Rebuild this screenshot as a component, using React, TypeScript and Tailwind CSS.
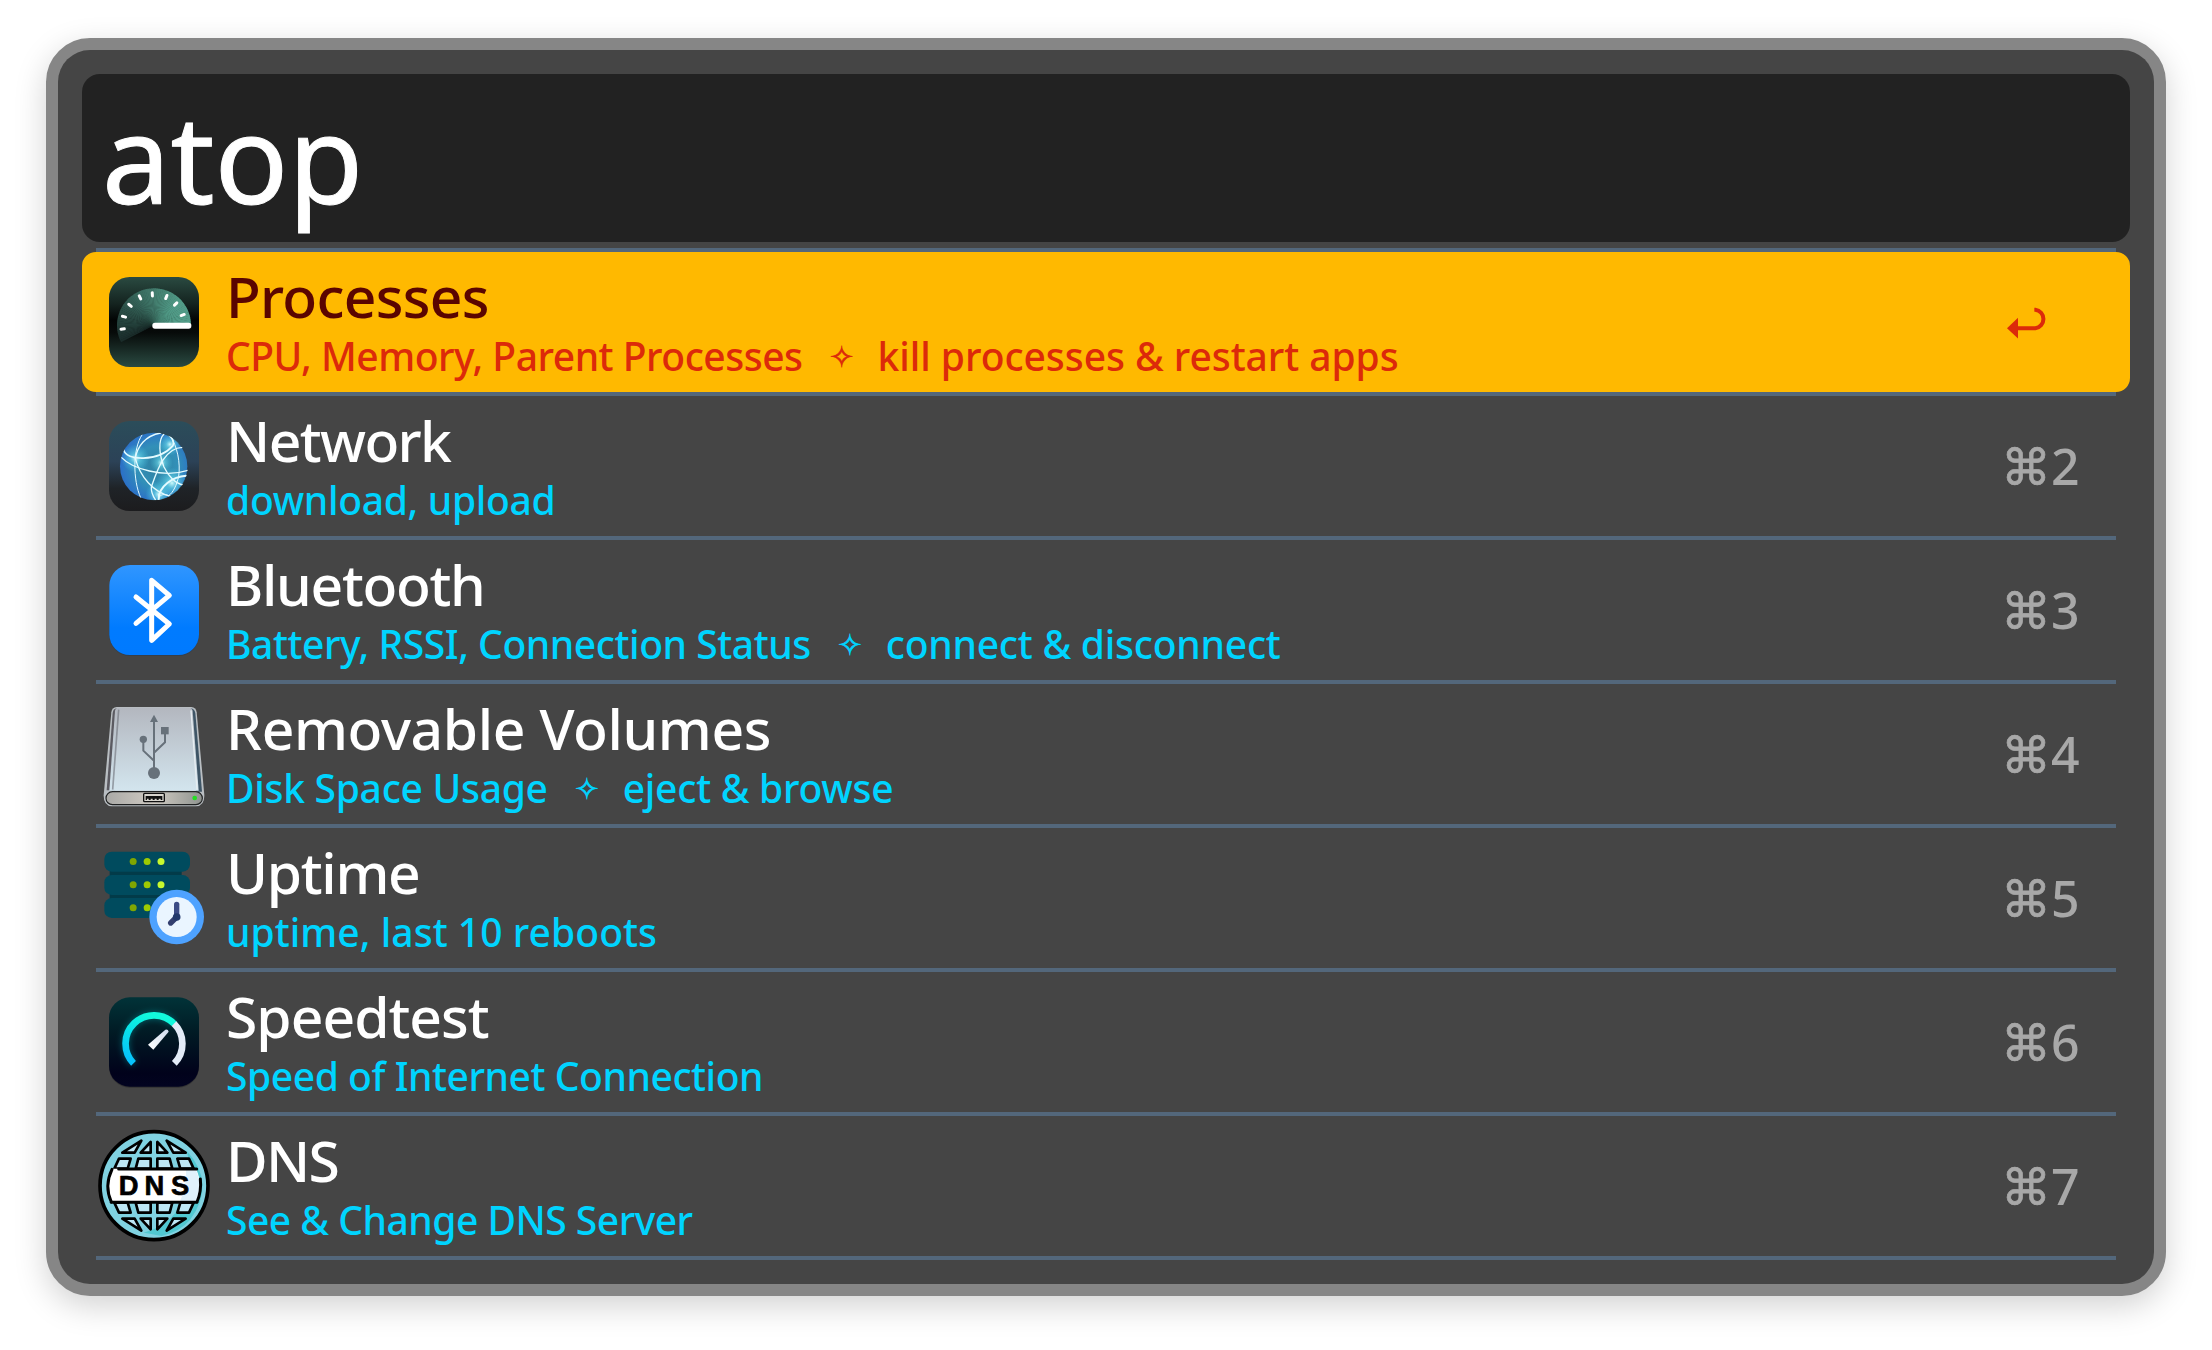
import type { ReactNode } from "react";

function ProcessesIcon() {
  const steps = 68;
  const start = 207;
  const slices = Array.from({ length: steps }, (_, i) => {
    const t = i / (steps - 1);
    const a0 = ((start - (i * start) / steps) * Math.PI) / 180;
    const a1 = ((start - ((i + 1.25) * start) / steps) * Math.PI) / 180;
    const end = i === steps - 1 ? 0 : a1;
    const k = Math.min(1, t * 1.25);
    const color = `rgb(${Math.round(26 + 56 * k)},${Math.round(44 + 112 * k)},${Math.round(42 + 94 * k)})`;
    const d = `M192 196L${192 + 111 * Math.cos(a0)} ${196 - 111 * Math.sin(a0)}A111 111 0 0 1 ${192 + 111 * Math.cos(end)} ${196 - 111 * Math.sin(end)}Z`;
    return { d, color };
  });
  const ticks = [[98, 207], [102, 170], [120, 136], [150, 112], [187, 103], [229, 111], [257, 132], [278, 165]];
  return (
    <svg viewBox="0 -6 384 384" className="size-32 shrink-0">
      <defs>
        <linearGradient id="procBg" x1="0" y1="0" x2="0" y2="1">
          <stop offset="0" stopColor="#2a4a41" />
          <stop offset="0.3" stopColor="#14231f" />
          <stop offset="0.48" stopColor="#020404" />
          <stop offset="0.62" stopColor="#070b0a" />
          <stop offset="1" stopColor="#2a4a41" />
        </linearGradient>
      </defs>
      <rect x="57" y="51" width="270" height="270" rx="62" fill="url(#procBg)" />
      {slices.map((s, i) => (
        <path key={i} d={s.d} fill={s.color} />
      ))}
      {ticks.map(([x, y], i) => {
        const a = Math.atan2(y - 196, x - 192);
        const dx = 5 * Math.cos(a);
        const dy = 5 * Math.sin(a);
        return <line key={i} x1={x - dx} y1={y - dy} x2={x + dx} y2={y + dy} stroke="#fff" strokeWidth="9" strokeLinecap="round" />;
      })}
      <rect x="187" y="188" width="117" height="18" rx="8" fill="#fff" />
    </svg>
  );
}

function NetworkIcon() {
  return (
    <svg viewBox="0 -9 384 384" className="size-32 shrink-0">
      <defs>
        <linearGradient id="netBg" x1="0" y1="0" x2="0" y2="1">
          <stop offset="0" stopColor="#2b4d5a" />
          <stop offset="0.45" stopColor="#2c4257" />
          <stop offset="0.75" stopColor="#1f2327" />
          <stop offset="1" stopColor="#1c1c1e" />
        </linearGradient>
        <radialGradient id="netGlobe" cx="0.55" cy="0.5" r="0.55">
          <stop offset="0" stopColor="#2f7f9f" />
          <stop offset="0.55" stopColor="#3290b8" />
          <stop offset="1" stopColor="#2b6fc8" />
        </radialGradient>
        <radialGradient id="netGlow">
          <stop offset="0" stopColor="#d8ffff" stopOpacity="0.95" />
          <stop offset="0.35" stopColor="#6fe0f0" stopOpacity="0.55" />
          <stop offset="1" stopColor="#4fd0e8" stopOpacity="0" />
        </radialGradient>
        <clipPath id="netClip">
          <circle cx="192" cy="184" r="102" />
        </clipPath>
      </defs>
      <rect x="57" y="48" width="270" height="270" rx="62" fill="url(#netBg)" />
      <circle cx="191" cy="184" r="101" fill="url(#netGlobe)" />
      <g clipPath="url(#netClip)">
        <circle cx="136" cy="160" r="42" fill="url(#netGlow)" />
        <circle cx="214" cy="173" r="34" fill="url(#netGlow)" />
        <circle cx="246" cy="234" r="46" fill="url(#netGlow)" />
        <circle cx="206" cy="268" r="40" fill="url(#netGlow)" />
        <circle cx="240" cy="118" r="34" fill="url(#netGlow)" />
        <g fill="none" stroke="#e4fbff" strokeLinecap="round">
          <path d="M101 134C106 168 205 172 249 122C252 110 246 98 238 92" strokeWidth="5" />
          <path d="M95 158C125 190 220 220 294 196" strokeWidth="4" />
          <path d="M156 90C128 130 128 225 152 278" strokeWidth="3" />
          <path d="M212 84C165 92 142 125 136 160C150 215 190 262 242 274" strokeWidth="4" />
          <path d="M222 87C203 105 208 150 222 186C234 212 256 236 280 240" strokeWidth="4" />
          <path d="M278 127C222 128 200 200 184 246C183 262 190 275 196 284" strokeWidth="4" />
          <path d="M240 92C262 122 272 175 266 214C260 240 250 262 236 272C222 266 212 268 206 278" strokeWidth="3" />
          <path d="M288 212C250 214 204 244 206 284" strokeWidth="6" />
        </g>
      </g>
    </svg>
  );
}

function BluetoothIcon() {
  return (
    <svg viewBox="0 -12 384 384" className="size-32 shrink-0">
      <defs>
        <linearGradient id="btBg" x1="0" y1="0" x2="0" y2="1">
          <stop offset="0" stopColor="#3096ff" />
          <stop offset="0.7" stopColor="#007bff" />
          <stop offset="1" stopColor="#007aff" />
        </linearGradient>
      </defs>
      <rect x="58" y="48" width="269" height="270" rx="62" fill="#2c3c50" opacity="0.6" />
      <rect x="58" y="45" width="269" height="270" rx="62" fill="url(#btBg)" />
      <path d="M138 141L238 222L185 271V91L238 136L138 220" fill="none" stroke="#fff" strokeWidth="15" strokeLinecap="round" strokeLinejoin="round" />
    </svg>
  );
}

function DriveIcon() {
  return (
    <svg viewBox="0 -15 384 384" className="size-32 shrink-0">
      <defs>
        <linearGradient id="drvTop" x1="0" y1="0" x2="0" y2="1">
          <stop offset="0" stopColor="#b3b7bf" />
          <stop offset="1" stopColor="#d3e5ee" />
        </linearGradient>
        <linearGradient id="drvFront" x1="0" y1="0" x2="1" y2="0">
          <stop offset="0" stopColor="#a9a9a6" />
          <stop offset="0.5" stopColor="#cfcac2" />
          <stop offset="1" stopColor="#8f938f" />
        </linearGradient>
      </defs>
      <path d="M80 36H304Q318 37 320 52L343 300Q344 333 318 334H66Q40 333 41 300L64 52Q66 37 80 36Z" fill="#b9bec2" />
      <path d="M80 40H92L76 286H50L68 54Q70 41 80 40Z" fill="#5b5a61" />
      <path d="M302 40Q314 42 316 54L336 290H318L298 40Z" fill="#3e5566" />
      <path d="M84 38H298Q307 39 308 48L326 287H58L75 48Q76 39 84 38Z" fill="url(#drvTop)" />
      <path d="M86 44L68 284" stroke="#6d7078" strokeWidth="5" opacity="0.6" />
      <path d="M303 46L321 284" stroke="#e6edf1" strokeWidth="4" />
      <rect x="48" y="290" width="289" height="39" rx="19.5" fill="url(#drvFront)" stroke="#1f2122" strokeWidth="3.5" />
      <rect x="161" y="295" width="62" height="25" rx="3" fill="#d8d5ce" stroke="#111" strokeWidth="4" />
      <path d="M167 303H217V315H212V311H206V315H200V311H194V315H188V311H182V315H176V311H171V315H167Z" fill="#111" />
      <circle cx="314" cy="309" r="7" fill="#22dd22" />
      <g fill="#67717a" stroke="#67717a">
        <circle cx="192" cy="234" r="18" stroke="none" />
        <circle cx="160" cy="133" r="11" stroke="none" />
        <rect x="213" y="96" width="23" height="22" stroke="none" />
        <path d="M192 59L204 81H180Z" stroke="none" />
        <path d="M192 225V78M192 197L160 167V138M192 173L225 142V112" fill="none" strokeWidth="6" />
      </g>
    </svg>
  );
}

function UptimeIcon() {
  return (
    <svg viewBox="0 -18 384 384" className="size-32 shrink-0">
      <rect x="59" y="90" width="216" height="90" fill="#023b49" />
      {[35, 105, 174].map((y) => (
        <g key={y}>
          <rect x="43" y={y} width="257" height="60" rx="22" fill="#004b5e" />
          <circle cx="129.500" cy={y + 29.5} r="10.500" fill="#7fa602" />
          <circle cx="171.500" cy={y + 29.5} r="10.500" fill="#9dca02" />
          <circle cx="213" cy={y + 29.5} r="10.500" fill="#c8f82e" />
        </g>
      ))}
      <circle cx="260" cy="231" r="82" fill="#4ea2ff" />
      <circle cx="260" cy="231" r="60" fill="#eaf5ff" />
      <path d="M260 231V193" stroke="#3c4b85" strokeWidth="16" strokeLinecap="round" />
      <path d="M260 231L242 249" stroke="#333f6f" strokeWidth="16" strokeLinecap="round" />
      <circle cx="260" cy="231" r="11.500" fill="#22386b" />
    </svg>
  );
}

function SpeedtestIcon() {
  return (
    <svg viewBox="0 -21 384 384" className="size-32 shrink-0">
      <defs>
        <linearGradient id="spBg" x1="0" y1="0" x2="0" y2="1">
          <stop offset="0" stopColor="#013338" />
          <stop offset="0.4" stopColor="#011a24" />
          <stop offset="0.85" stopColor="#01021b" />
          <stop offset="1" stopColor="#020320" />
        </linearGradient>
        <linearGradient id="spArc" x1="0" y1="1" x2="0.5" y2="0">
          <stop offset="0" stopColor="#06bdff" />
          <stop offset="0.7" stopColor="#0ae8e6" />
          <stop offset="1" stopColor="#12f8dc" />
        </linearGradient>
        <linearGradient id="spNeedle" x1="0" y1="1" x2="1" y2="0">
          <stop offset="0" stopColor="#ffffff" />
          <stop offset="1" stopColor="#cfdcee" />
        </linearGradient>
        <filter id="spBlur" x="-30%" y="-30%" width="160%" height="160%">
          <feGaussianBlur stdDeviation="9" />
        </filter>
      </defs>
      <rect x="57" y="40" width="270" height="268" rx="62" fill="#222" opacity="0.5" />
      <rect x="57" y="37" width="270" height="268" rx="62" fill="url(#spBg)" />
      <path d="M130.500 235A84 84 0 0 1 253 117" fill="none" stroke="#07a6b0" strokeOpacity="0.45" strokeWidth="22" filter="url(#spBlur)" />
      <path d="M130.500 235A84 84 0 0 1 253 117" fill="none" stroke="url(#spArc)" strokeWidth="20" />
      <path d="M252 116A84 84 0 0 1 253 235" fill="none" stroke="#e3ecf8" strokeWidth="20" />
      <path d="M174 179L226 134Q234 131 236 140L190 194Z" fill="url(#spNeedle)" />
    </svg>
  );
}

function DnsIcon() {
  const cells = (
    <>
      <path d="M154 62L97 98H134Z" />
      <path d="M182 66V98H152Z" />
      <path d="M202 66V98H232Z" />
      <path d="M230 62L287 98H250Z" />
      <path d="M87 116H122L113 146H73Z" />
      <path d="M145 116H182V146H137Z" />
      <path d="M202 116H239L247 146H202Z" />
      <path d="M262 116H297L311 146H271Z" />
    </>
  );
  return (
    <svg viewBox="0 6 384 384" className="size-32 shrink-0">
      <circle cx="192" cy="197" r="162" fill="#80d2e1" stroke="#000" strokeWidth="11" />
      <path d="M290 92Q380 190 300 300Q270 335 215 348Q180 340 160 338Q230 320 262 270Q320 200 290 92Z" fill="#41c4cb" opacity="0.75" />
      <g fill="#bde7f5" stroke="#000" strokeWidth="8" strokeLinejoin="round">
        {cells}
        <g transform="matrix(1 0 0 -1 0 394)">{cells}</g>
      </g>
      <path d="M66 146H318Q342 197 318 248H66Q42 197 66 146Z" fill="#fff" />
      <path d="M288 150H318Q340 197 318 244H270Q292 197 288 150Z" fill="#e0f1fb" />
      <g fill="none" stroke="#000" strokeWidth="9" strokeLinecap="round">
        <path d="M86 147H320" />
        <path d="M64 247H320" />
        <path d="M66 148Q42 197 64 246" />
        <path d="M331 177Q335 214 321 246" />
      </g>
      <g className="font-['Liberation_Sans',sans-serif] font-bold" fontSize="82" textAnchor="middle" stroke="#000" strokeWidth="2" strokeLinejoin="round">
        <text x="116" y="226">D</text>
        <text x="193" y="226">N</text>
        <text x="270" y="226">S</text>
      </g>
    </svg>
  );
}

function ReturnArrow() {
  return (
    <svg viewBox="318 262 120 95" className="ml-[6px] mt-0.5 h-[32px] w-[40px]">
      <path d="M318 325L351 294V356Z" fill="#dc2a0a" />
      <path d="M349 325H403A28 28 0 0 0 403 269.500H400" fill="none" stroke="#dc2a0a" strokeWidth="12" />
    </svg>
  );
}

type Item = {
  title: string;
  titleTracking: string;
  icon: ReactNode;
  sub: string;
  subTracking: string;
  action?: string;
  actionTracking?: string;
  shortcut?: string;
};

const items: Item[] = [
  { title: "Processes", titleTracking: "tracking-[-0.7px]", icon: <ProcessesIcon />, sub: "CPU, Memory, Parent Processes", subTracking: "tracking-[-0.48px]", action: "kill processes & restart apps", actionTracking: "tracking-[-0.05px]" },
  { title: "Network", titleTracking: "tracking-[-1.6px]", icon: <NetworkIcon />, sub: "download, upload", subTracking: "tracking-[-0.3px]", shortcut: "2" },
  { title: "Bluetooth", titleTracking: "tracking-[-1.3px]", icon: <BluetoothIcon />, sub: "Battery, RSSI, Connection Status", subTracking: "tracking-[-0.43px]", action: "connect & disconnect", actionTracking: "tracking-[-0.23px]", shortcut: "3" },
  { title: "Removable Volumes", titleTracking: "tracking-[-0.38px]", icon: <DriveIcon />, sub: "Disk Space Usage", subTracking: "tracking-[-0.28px]", action: "eject & browse", actionTracking: "tracking-[-0.25px]", shortcut: "4" },
  { title: "Uptime", titleTracking: "tracking-[-1.3px]", icon: <UptimeIcon />, sub: "uptime, last 10 reboots", subTracking: "tracking-[0.06px]", shortcut: "5" },
  { title: "Speedtest", titleTracking: "tracking-[-1px]", icon: <SpeedtestIcon />, sub: "Speed of Internet Connection", subTracking: "tracking-[-0.44px]", shortcut: "6" },
  { title: "DNS", titleTracking: "tracking-[-1.7px]", icon: <DnsIcon />, sub: "See & Change DNS Server", subTracking: "tracking-[-0.5px]", shortcut: "7" },
];

function Row({ item, selected }: { item: Item; selected: boolean }) {
  return (
    <li>
      <div className={`flex h-[140px] items-center gap-2 rounded-[14px] pl-2 ${selected ? "bg-[#ffb900]" : ""}`}>
        {item.icon}
        <div className="flex-1 self-start whitespace-nowrap pt-3 font-medium">
          <div className={`text-[57px] leading-[64px] ${item.titleTracking} ${selected ? "text-[#5a0500]" : "text-white"}`}>{item.title}</div>
          <div className={`flex text-[39px] leading-[55px] ${selected ? "text-[#dc2a0a]" : "text-[#00d4ff]"}`}>
            <span className={item.subTracking}>{item.sub}</span>
            {item.action && (
              <>
                <span className="ml-[27px] mr-[24px] w-6 text-center font-['DejaVu_Sans',sans-serif] text-[29px] font-normal leading-[59px] [-webkit-text-stroke:0.7px]">✧</span>
                <span className={item.actionTracking}>{item.action}</span>
              </>
            )}
          </div>
        </div>
        <div className="flex w-[129px] items-baseline text-[50px] leading-[60px] text-[#a8a8a8]">
          {item.shortcut ? (
            <>
              <span className="pt-1 font-['DejaVu_Sans',sans-serif] leading-[60px] [-webkit-text-stroke:0.7px]">⌘</span>
              <span className="font-medium">{item.shortcut}</span>
            </>
          ) : (
            <ReturnArrow />
          )}
        </div>
      </div>
      <div className="mx-3.5 h-1 bg-[#53677b]" />
    </li>
  );
}

export default function App() {
  return (
    <div className="flex h-[1350px] w-[2212px] items-start overflow-hidden bg-white px-[46px] pt-[38px] font-['Noto_Sans',sans-serif]">
      <div className="h-[1258px] w-full rounded-[44px] border-12 border-[#868686] bg-[#868686] shadow-[0_10px_32px_rgba(0,0,0,0.18)]">
        <div className="h-full rounded-[32px] bg-[#454545] p-6">
          <div className="h-[168px] rounded-[18px] bg-[#222] pl-5 text-[122px] leading-[166px] text-white [-webkit-text-stroke:1px]">atop</div>
          <div className="mx-3.5 mt-1.5 h-1 bg-[#53677b]" />
          <ul>
            {items.map((item, i) => (
              <Row key={item.title} item={item} selected={i === 0} />
            ))}
          </ul>
        </div>
      </div>
    </div>
  );
}
